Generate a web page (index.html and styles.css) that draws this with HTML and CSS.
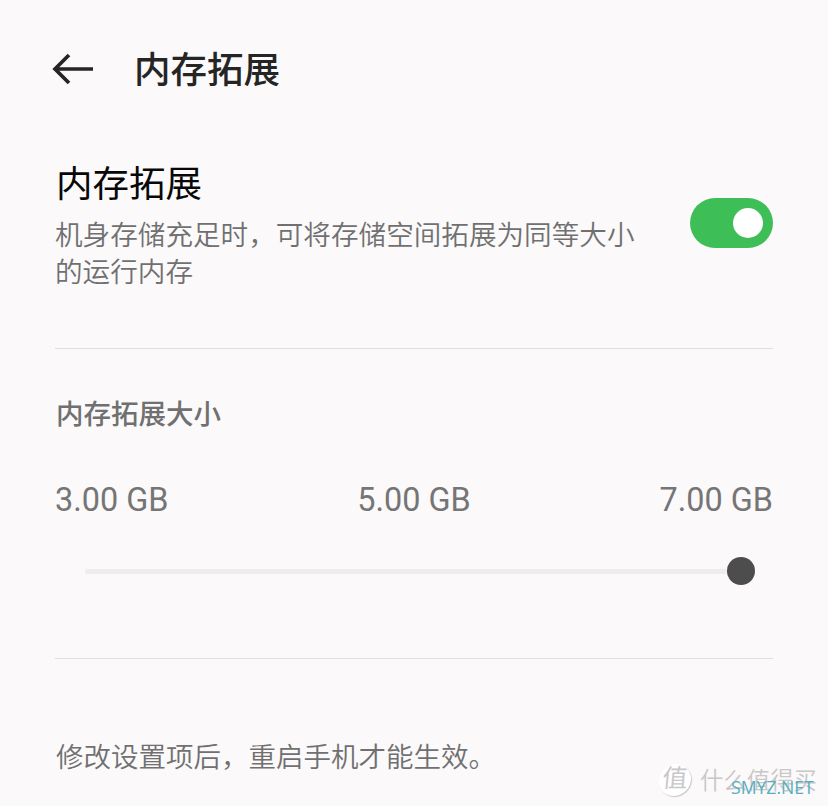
FILE: index.html
```html
<!DOCTYPE html>
<html lang="zh-CN">
<head>
<meta charset="utf-8">
<title>内存拓展</title>
<link rel="stylesheet" href="styles.css">
</head>
<body>
<main class="page">
  <header class="bar">
    <svg class="back" viewBox="0 0 42 32" width="42" height="32"><path d="M42 16H4M18 2L4 16l14 14" fill="none" stroke="#252525" stroke-width="3.7"/></svg>
    <h1 class="heading">内存拓展</h1>
  </header>
  <section class="setting">
    <div class="copy">
      <h2 class="name">内存拓展</h2>
      <p class="desc">机身存储充足时，可将存储空间拓展为同等大小<br>的运行内存</p>
    </div>
    <div class="switch"><span class="knob"></span></div>
  </section>
  <section class="size">
    <h3 class="label">内存拓展大小</h3>
    <div class="values"><span>3.00 GB</span><span>5.00 GB</span><span>7.00 GB</span></div>
    <div class="slider"><div class="track"></div><span class="thumb"></span></div>
  </section>
  <footer class="note">修改设置项后，重启手机才能生效。</footer>
</main>
<div class="watermark"><span class="badge">值</span><span class="brand">什么值得买</span></div>
<div class="site">SMYZ.NET</div>
</body>
</html>
```
FILE: styles.css
```css
* { box-sizing: border-box; margin: 0; padding: 0; }
body { position: relative; width: 828px; height: 806px; overflow: hidden; background: #fbf9fa; font-family: Roboto, "Noto Sans CJK SC", sans-serif; color: #707070; }
.page { padding: 0 55px; }
.bar { display: flex; align-items: center; height: 140px; gap: 41px; margin-left: -4px; }
.back { margin-top: -2px; }
.heading { font-size: 36.5px; font-weight: 500; line-height: 48px; margin-top: 2px; color: #252525; }
.setting { display: flex; justify-content: space-between; height: 209px; padding-top: 21px; border-bottom: 1px solid #e0dedf; }
.name { font-size: 36.5px; font-weight: 400; line-height: 48px; margin-left: 1px; color: #080808; }
.desc { font-size: 27.6px; font-weight: 350; line-height: 37px; margin-top: 8px; white-space: nowrap; }
.switch { width: 83px; height: 50px; margin-top: 37px; padding: 10px; border-radius: 25px; background: #3dbe57; display: flex; justify-content: flex-end; }
.knob { width: 30px; height: 30px; border-radius: 50%; background: #fff; }
.size { height: 310px; padding-top: 47px; border-bottom: 1px solid #e0dedf; }
.label { font-size: 27.5px; font-weight: 500; line-height: 38px; margin-left: 1px; }
.values { display: flex; justify-content: space-between; margin-top: 47px; font-size: 32.4px; line-height: 38px; color: #757575; }
.slider { display: flex; align-items: center; margin: 38px 18.5px 0 30px; height: 28px; }
.track { flex: 1; height: 5px; border-radius: 2px; background: #eeeced; }
.thumb { width: 28px; height: 28px; border-radius: 50%; background: #4d4d4d; }
.note { margin-top: 80px; margin-left: 1px; font-size: 27.5px; font-weight: 350; line-height: 38px; }
.watermark { position: absolute; left: 659px; top: 763px; display: flex; align-items: center; gap: 9px; color: #c9c7c8; font-size: 23.4px; font-weight: 350; line-height: 32px; white-space: nowrap; }
.badge { width: 32px; height: 32px; border-radius: 50%; background: #fff; box-shadow: 1px 1px 1px #c9c7c8; font-size: 25px; font-weight: 400; line-height: 30px; text-align: center; transform: skewX(-5deg); }
.brand { margin-top: 2px; }
.site { position: absolute; left: 731px; top: 776px; font: 500 17.6px/22px "Open Sans", sans-serif; color: #55afbf; }
```
